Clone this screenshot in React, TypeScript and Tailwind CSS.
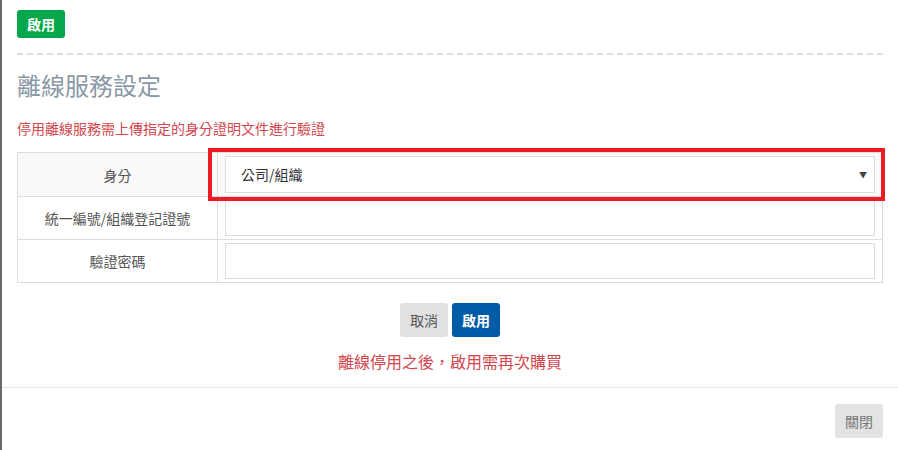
const FONT = { fontFamily: '"Noto Sans CJK TC", "Liberation Sans", sans-serif' };

const rows = [
  { label: "身分", kind: "select" },
  { label: "統一編號/組織登記證號", kind: "input" },
  { label: "驗證密碼", kind: "input" },
];

export default function App() {
  return (
    <div
      className="w-[898px] h-[450px] overflow-hidden bg-white border-l-2 border-[#6b6b6b] text-[14px] text-[#333]"
      style={FONT}
    >
      <div className="pl-[15px] pr-[15px] pt-[10px]">
        <button className="h-[28px] w-[48px] rounded-[3px] bg-[#04a84a] text-[14px] font-bold text-white leading-none">
          啟用
        </button>

        <div className="mt-[15px] border-t-2 border-dashed border-[#dcdcdc]" />

        <h2 className="mt-[17px] text-[24px] leading-[26px] text-[#8a99a6]">
          離線服務設定
        </h2>

        <p className="mt-[20px] text-[14px] leading-[20px] text-[#d2464d]">
          停用離線服務需上傳指定的身分證明文件進行驗證
        </p>

        <div className="relative mt-[14px]">
          <table className="w-full border-collapse">
            <tbody>
              {rows.map((row, i) => (
                <tr key={row.label} className={i === 0 ? "bg-[#f9f9f9]" : ""}>
                  <td className="w-[200px] border border-[#dddddd] text-center text-[#555] leading-[20px]">
                    {row.label}
                  </td>
                  <td className="border border-[#dddddd] px-[7px] py-[3px]">
                    {row.kind === "select" ? (
                      <div className="flex h-[37px] items-center justify-between border border-[#dddddd] bg-white pl-[15px] pr-[7px] text-[#333]">
                        <span>公司/組織</span>
                        <span className="text-[8px] text-[#444]">▼</span>
                      </div>
                    ) : (
                      <div className="h-[36px] border border-[#dddddd] bg-white" />
                    )}
                  </td>
                </tr>
              ))}
            </tbody>
          </table>
          <div className="pointer-events-none absolute left-[191px] top-[-4px] h-[53px] w-[677px] border-4 border-[#ed1c24]" />
        </div>

        <div className="mt-[20px] flex justify-center gap-[4px]">
          <button className="h-[34px] w-[48px] rounded-[3px] bg-[#e1e1e3] text-[14px] text-[#555]">
            取消
          </button>
          <button className="h-[34px] w-[48px] rounded-[3px] bg-[#025ba6] text-[14px] font-bold text-white">
            啟用
          </button>
        </div>

        <p className="mt-[13px] text-center text-[16px] leading-[22px] text-[#d2464d]">
          離線停用之後，啟用需再次購買
        </p>
      </div>

      <div className="mt-[15px] border-t border-[#e5e5e5] flex justify-end pr-[15px] pt-[16px]">
        <button className="h-[34px] w-[48px] rounded-[3px] bg-[#e3e3e3] text-[14px] text-[#777]">
          關閉
        </button>
      </div>
    </div>
  );
}
